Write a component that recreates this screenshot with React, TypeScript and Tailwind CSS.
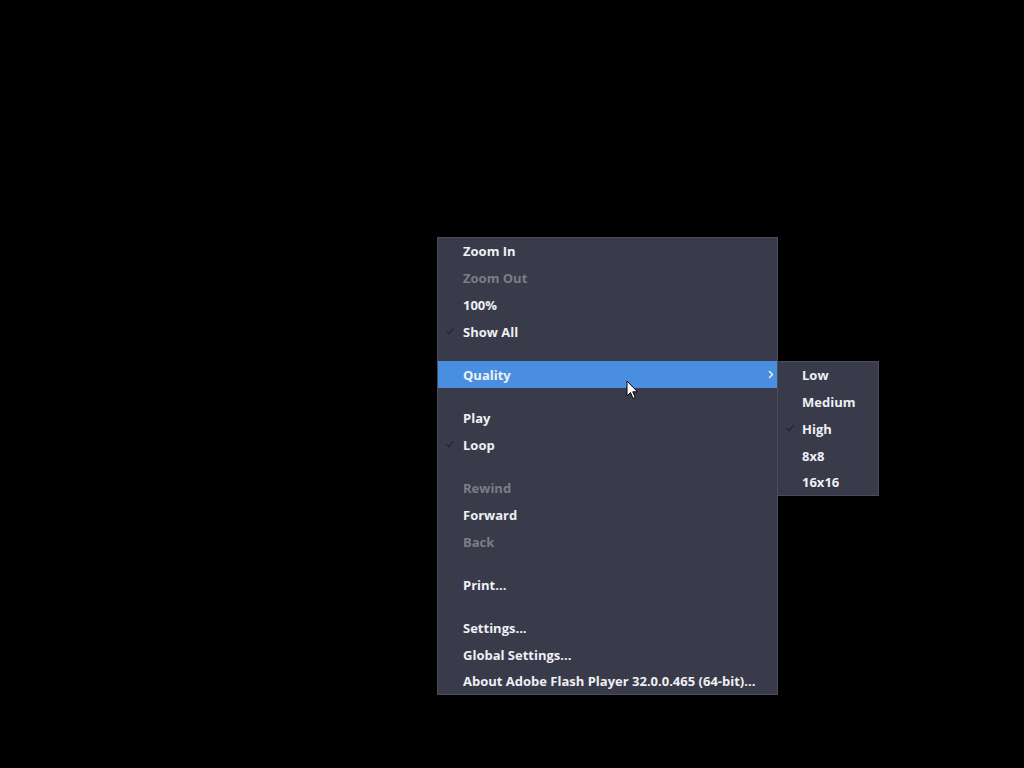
import React from "react";

type Item =
  | { kind: "sep" }
  | {
      kind: "item";
      label: string;
      disabled?: boolean;
      checked?: boolean;
      active?: boolean;
      submenu?: boolean;
      h?: string;
    };

const mainItems: Item[] = [
  { kind: "item", label: "Zoom In", h: "h-[26px]" },
  { kind: "item", label: "Zoom Out", disabled: true },
  { kind: "item", label: "100%" },
  { kind: "item", label: "Show All", checked: true },
  { kind: "sep" },
  { kind: "item", label: "Quality", active: true, submenu: true },
  { kind: "sep" },
  { kind: "item", label: "Play" },
  { kind: "item", label: "Loop", checked: true },
  { kind: "sep" },
  { kind: "item", label: "Rewind", disabled: true },
  { kind: "item", label: "Forward" },
  { kind: "item", label: "Back", disabled: true },
  { kind: "sep" },
  { kind: "item", label: "Print..." },
  { kind: "sep" },
  { kind: "item", label: "Settings..." },
  { kind: "item", label: "Global Settings..." },
  { kind: "item", label: "About Adobe Flash Player 32.0.0.465 (64-bit)...", h: "h-[26px]" },
];

const qualityItems: Item[] = [
  { kind: "item", label: "Low", h: "h-[26px]" },
  { kind: "item", label: "Medium" },
  { kind: "item", label: "High", checked: true },
  { kind: "item", label: "8x8" },
  { kind: "item", label: "16x16", h: "h-[26px]" },
];

function Check() {
  return (
    <svg width="8" height="7" viewBox="0 0 8 7" className="absolute left-[8px] top-1/2 -translate-y-[60%]">
      <path d="M1 4 L3 6 L7 1" fill="none" stroke="#262834" strokeWidth="1.6" strokeLinecap="round" strokeLinejoin="round" />
    </svg>
  );
}

function Chevron() {
  return (
    <svg width="6" height="9" viewBox="0 0 6 9" className="absolute right-[3px] top-1/2 -translate-y-[55%]">
      <path d="M1.5 1.5 L4.5 4.5 L1.5 7.5" fill="none" stroke="#e8eefa" strokeWidth="1.5" strokeLinecap="round" strokeLinejoin="round" />
    </svg>
  );
}

function MenuList({ items, pl }: { items: Item[]; pl: string }) {
  return (
    <>
      {items.map((it, i) =>
        it.kind === "sep" ? (
          <div key={i} className="h-[16px]" />
        ) : (
          <div
            key={i}
            className={`relative flex items-center ${it.h ?? "h-[27px]"} ${pl} pt-[2px] whitespace-nowrap text-[13px] font-bold ${
              it.active ? "bg-[#4a8fdf]" : ""
            } ${it.disabled ? "text-[#7b7d88]" : "text-[#eef0f4]"}`}
          >
            {it.checked && <Check />}
            {it.label}
            {it.submenu && <Chevron />}
          </div>
        ),
      )}
    </>
  );
}

function Cursor() {
  return (
    <svg width="13" height="20" viewBox="0 0 13 20" className="absolute left-[188px] top-[142px]">
      <path
        d="M1 1 L1 16 L4.5 12.5 L7 18.5 L9.3 17.5 L6.8 11.8 L11.5 11.8 Z"
        fill="#ffffff"
        stroke="#000000"
        strokeWidth="1"
        strokeLinejoin="round"
      />
    </svg>
  );
}

export default function App() {
  return (
    <div
      className="flex h-screen w-full items-start bg-black pl-[437px] pt-[237px]"
      style={{ fontFamily: '"Open Sans", "Noto Sans", sans-serif' }}
    >
      <div className="relative w-[341px] border border-[#4a4c5b] bg-[#393a4a]">
        <MenuList items={mainItems} pl="pl-[25px]" />
        <Cursor />
      </div>
      <div className="-ml-px mt-[124px] w-[102px] border border-[#4a4c5b] bg-[#393a4a]">
        <MenuList items={qualityItems} pl="pl-[24px]" />
      </div>
    </div>
  );
}
